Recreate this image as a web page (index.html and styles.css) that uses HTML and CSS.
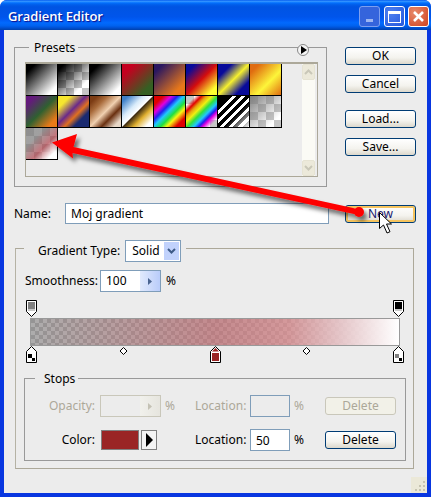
FILE: index.html
```html
<!DOCTYPE html>
<html lang="en">
<head>
<meta charset="utf-8">
<title>Gradient Editor</title>
<link rel="stylesheet" href="styles.css">
</head>
<body>
<div class="window">
  <header class="titlebar">
    <span class="title">Gradient Editor</span>
    <div class="controls">
      <span class="ctl ctl-min"><i></i></span>
      <span class="ctl ctl-max"><i></i></span>
      <span class="ctl ctl-close">
        <svg width="13" height="13" viewBox="0 0 13 13"><path d="M2 2l9 9M11 2l-9 9" stroke="#fff" stroke-width="2.6"/></svg>
      </span>
    </div>
  </header>
  <main class="client">
    <div class="top">
      <section class="presets">
        <div class="group-legend presets-legend">Presets</div>
        <span class="round-btn"><svg width="6" height="8" viewBox="0 0 6 8"><path d="M0 0l6 4-6 4z" fill="#000"/></svg></span>
        <div class="listbox">
          <div class="swatches">
            <span class="sw s1"></span><span class="sw s2"></span><span class="sw s1"></span><span class="sw s4"></span>
            <span class="sw s5"></span><span class="sw s6"></span><span class="sw s7"></span><span class="sw s8"></span>
            <span class="sw s9"></span><span class="sw s10"></span><span class="sw s11"></span><span class="sw s12"></span>
            <span class="sw s13"></span><span class="sw s14"></span><span class="sw s15"></span><span class="sw s16"></span>
            <span class="sw s17"></span>
          </div>
          <div class="scrollbar">
            <span class="sb-btn"><svg width="9" height="6" viewBox="0 0 9 6"><path d="M1 5l3.5-3.5L8 5" fill="none" stroke="#c9c7b8" stroke-width="2"/></svg></span>
            <span class="sb-btn"><svg width="9" height="6" viewBox="0 0 9 6"><path d="M1 1l3.5 3.5L8 1" fill="none" stroke="#c9c7b8" stroke-width="2"/></svg></span>
          </div>
        </div>
      </section>
      <div class="side-buttons">
        <button class="btn">OK</button>
        <button class="btn">Cancel</button>
        <button class="btn btn-load">Load...</button>
        <button class="btn">Save...</button>
      </div>
    </div>

    <div class="name-row">
      <label class="name-label">Name:</label>
      <input class="field name-input" value="Moj gradient">
      <button class="btn btn-new">New</button>
    </div>

    <section class="type-group">
      <div class="type-legend">
        <span>Gradient Type:</span>
        <div class="select"><span class="select-text">Solid</span>
          <span class="select-btn"><svg width="9" height="6" viewBox="0 0 9 6"><path d="M1 1l3.500 3.500L8 1" fill="none" stroke="#3d5a86" stroke-width="2"/></svg></span>
        </div>
      </div>
      <div class="smooth-row">
        <span class="smooth-label">Smoothness:</span>
        <div class="spin"><span class="spin-text">100</span>
          <span class="spin-btn"><svg width="4" height="7" viewBox="0 0 4 7"><path d="M0 0l4 3.500L0 7z" fill="#4a6490"/></svg></span>
        </div>
        <span class="pct">%</span>
      </div>
      <div class="ramp">
        <div class="ramp-row">
          <svg class="stop" viewBox="0 0 11 17"><path d="M.5.5h10v11l-5 5-5-5z" fill="#fff" stroke="#000"/><rect x="2" y="2" width="7" height="7" fill="#808080"/><rect x="2" y="9" width="7" height="2" fill="#c8c8c8"/></svg>
          <svg class="stop" viewBox="0 0 11 17"><path d="M.5.5h10v11l-5 5-5-5z" fill="#fff" stroke="#000"/><rect x="2" y="2" width="7" height="7" fill="#000"/><rect x="2" y="9" width="7" height="2" fill="#c8c8c8"/></svg>
        </div>
        <div class="bar"></div>
        <div class="ramp-row">
          <svg class="stop" viewBox="0 0 11 17"><path d="M5.500.5l5 5v11H.5V5.500z" fill="#fff" stroke="#000"/><rect x="2" y="8" width="4" height="4" fill="#000"/><rect x="6" y="12" width="3" height="3" fill="#000"/></svg>
          <svg class="stop" viewBox="0 0 11 17"><path d="M5.500 1.500l3.500 3.500-3.500 3.500L2 5z" fill="#fff" stroke="#000"/></svg>
          <svg class="stop" viewBox="0 0 11 17"><path d="M5.500.5l5 5v11H.5V5.500z" fill="#fff" stroke="#000"/><path d="M5.500 2L9 5.500H2z" fill="#9a2525"/><rect x="2" y="7" width="7" height="8" fill="#9a2525"/></svg>
          <svg class="stop" viewBox="0 0 11 17"><path d="M5.500 1.500l3.500 3.500-3.500 3.500L2 5z" fill="#fff" stroke="#000"/></svg>
          <svg class="stop" viewBox="0 0 11 17"><path d="M5.500.5l5 5v11H.5V5.500z" fill="#fff" stroke="#000"/><rect x="2" y="8" width="4" height="4" fill="#808080"/><rect x="6" y="12" width="3" height="3" fill="#000"/></svg>
        </div>
      </div>
      <section class="stops-group">
        <div class="group-legend stops-legend">Stops</div>
        <div class="stops-grid">
          <span class="cell-label off">Opacity:</span>
          <div class="spin spin-off"><span class="spin-text"></span>
            <span class="spin-btn"><svg width="4" height="7" viewBox="0 0 4 7"><path d="M0 0l4 3.500L0 7z" fill="#c4c2b4"/></svg></span>
          </div>
          <span class="off pct-cell">%</span>
          <span class="off">Location:</span>
          <input class="field small-input small-off" value="">
          <span class="off pct-cell">%</span>
          <button class="btn btn-off">Delete</button>

          <span class="cell-label">Color:</span>
          <div class="color-cell">
            <span class="color-chip"></span>
            <span class="color-arrow"><svg width="7" height="14" viewBox="0 0 7 14"><path d="M0 0l7 7-7 7z" fill="#000"/></svg></span>
          </div>
          <span class="pct-cell"></span>
          <span>Location:</span>
          <input class="field small-input" value="50">
          <span class="pct-cell">%</span>
          <button class="btn">Delete</button>
        </div>
      </section>
    </section>
    <svg class="grip" width="16" height="16" viewBox="0 0 16 16"><rect width="16" height="16" fill="#ebe8d8"/><path d="M12 4h2v2h-2zM8 8h2v2H8zM12 8h2v2h-2zM4 12h2v2H4zM8 12h2v2H8zM12 12h2v2h-2z" fill="#c6c3b0"/></svg>
  </main>

  <svg class="overlay" width="431" height="497" viewBox="0 0 431 497">
    <defs>
      <filter id="sh" x="-10%" y="-30%" width="120%" height="170%">
        <feDropShadow dx="3" dy="4" stdDeviation="2.2" flood-color="#000" flood-opacity=".55"/>
      </filter>
    </defs>
    <g filter="url(#sh)" fill="#fe0000">
      <path d="M52 142.500L77 134 73.500 147 360 209.500 358.500 215 72.500 153 73 158.500z"/>
      <circle cx="359" cy="212" r="5"/>
    </g>
    <path d="M379.500 212.500v16l4-3.500 3.500 8 3-1.300-3.500-7.700 5 0z" fill="#fff" stroke="#000"/>
  </svg>
</div>
</body>
</html>
```
FILE: styles.css
```css
* { box-sizing: border-box; }
html, body { margin: 0; padding: 0; }
body {
  width: 431px;
  height: 497px;
  overflow: hidden;
  background: #fff;
  font: 12px/14px "Noto Sans", "DejaVu Sans", sans-serif;
  color: #000;
}
.window {
  position: relative;
  width: 431px;
  height: 497px;
  display: flex;
  flex-direction: column;
  background: #0836e0;
  border-radius: 7px 7px 0 0;
  overflow: hidden;
}
.titlebar {
  flex: none;
  height: 30px;
  display: flex;
  align-items: flex-start;
  justify-content: space-between;
  padding: 6px 2px 0 8px;
  background: linear-gradient(180deg, #0058ee 0, #3593ff 4%, #288eff 6%, #127dff 8%, #036ffc 10%, #0262ee 14%, #0057e5 20%, #0054e3 24%, #0055eb 56%, #005bf5 66%, #026afe 76%, #0062ef 86%, #0052d6 92%, #0040ab 100%);
}
.title {
  font: 600 13px/20px "Open Sans", sans-serif;
  letter-spacing: -.1px;
  color: #fff;
  text-shadow: 1px 1px 1px #0f1089;
}
.controls { display: flex; gap: 3px; }
.ctl {
  width: 21px;
  height: 21px;
  border: 1px solid #fff;
  border-radius: 3px;
  display: flex;
  align-items: center;
  justify-content: center;
}
.ctl-min {
  border-color: #7d9ff0;
  background: #3564dc;
  margin-right: 1px;
  align-items: flex-end;
  padding-bottom: 4px;
}
.ctl-min i { width: 7px; height: 3px; background: #9db6f2; }
.ctl-max { background: radial-gradient(circle at 30% 30%, #4f80f0, #2558dc); }
.ctl-max i { width: 13px; height: 12px; border: 1px solid #fff; border-top-width: 3px; }
.ctl-close { background: radial-gradient(circle at 30% 30%, #e88a6c, #d0431f); }

.client {
  position: relative;
  flex: 1;
  margin: 0 4px 4px;
  padding: 0 11px 0 10px;
  background: #ececec;
  display: flex;
  flex-direction: column;
}
.top {
  display: flex;
  justify-content: space-between;
  padding-top: 17px;
}
.group-legend {
  width: fit-content;
  height: 14px;
  margin-top: -7px;
  background: #ececec;
}
.presets {
  position: relative;
  width: 313px;
  height: 140px;
  border: 1px solid #999;
}
.presets-legend { margin-left: 14px; padding: 0 3px 0 5px; }
.round-btn {
  position: absolute;
  top: -4px;
  right: 17px;
  width: 12px;
  height: 12px;
  border: 1px solid #888;
  border-radius: 50%;
  background: #f4f4f4;
  display: flex;
  align-items: center;
  justify-content: center;
  padding-left: 1px;
}
.listbox {
  display: flex;
  justify-content: space-between;
  width: 293px;
  height: 115px;
  margin: 7px 0 0 10px;
  border: 1px solid #aca899;
  border-width: 2px 1px 1px 1px;
  padding-right: 2px;
}
.swatches {
  width: 256px;
  display: grid;
  grid-template-columns: repeat(8, 32px);
  grid-auto-rows: 32px;
  align-content: start;
}
.sw { border-right: 1px solid #000; border-bottom: 1px solid #000; }
.s1 { background: linear-gradient(135deg, #000 15%, #fff 85%); }
.s2 { background: linear-gradient(135deg, #000 10%, transparent 75%), conic-gradient(#fff 25%, #c6c6c6 0 50%, #fff 0 75%, #c6c6c6 0) 0 0/16px 16px; }
.s4 { background: linear-gradient(135deg, #c4001f 20%, #356023 80%); }
.s5 { background: linear-gradient(135deg, #2a1760 15%, #e8781a 80%); }
.s6 { background: linear-gradient(135deg, #080a9a 15%, #d40d0d 50%, #ffff30 85%); }
.s7 { background: linear-gradient(135deg, #080a9a 22%, #f6f02e 50%, #080a9a 78%); }
.s8 { background: linear-gradient(135deg, #e06c10 15%, #fdf53a 60%, #e06c10 100%); }
.s9 { background: linear-gradient(135deg, #641a7c 15%, #2f6030 50%, #ea7a18 85%); }
.s10 { background: linear-gradient(135deg, #f6e62e 20%, #6a2a8a 45%, #e07020 60%, #1a2a70 75%); }
.s11 { background: linear-gradient(135deg, #7c3c14 12%, #a86a3a 28%, #f0d0b0 50%, #6a3010 68%, #e8d8c8 88%); }
.s12 { background: linear-gradient(135deg, #3f80c8 10%, #d8ebfa 35%, #fff 49%, #3a2810 51%, #e0b030 68%, #fff 88%); }
.s13 { background: linear-gradient(135deg, #e00000 15%, #e000e0 28%, #2020f0 38%, #20c8ff 48%, #20e040 60%, #f8f810 70%, #e00000 85%); }
.s14 { background: linear-gradient(135deg, transparent 15%, #e00000 25%, #e8a010 33%, #f0f010 42%, #30e040 52%, #20c8ff 62%, #2020f0 70%, #e000e0 76%, transparent 88%), conic-gradient(#fff 25%, #c6c6c6 0 50%, #fff 0 75%, #c6c6c6 0) 0 0/16px 16px; }
.s15 { background: linear-gradient(135deg, #000 22%, transparent 22%), linear-gradient(135deg, transparent 60%, rgba(255,255,255,.85) 95%), repeating-linear-gradient(135deg, #000 0 3.500px, #fff 3.500px 6.500px); }
.s16 { background: linear-gradient(135deg, #808080 0, transparent 80%), conic-gradient(#fff 25%, #c6c6c6 0 50%, #fff 0 75%, #c6c6c6 0) 0 0/16px 16px; }
.s17 { background: linear-gradient(135deg, rgba(120,120,120,.7) 30%, rgba(170,60,70,.7) 60%, #fff 85%), conic-gradient(#fff 25%, #c6c6c6 0 50%, #fff 0 75%, #c6c6c6 0) 0 0/16px 16px; }
.scrollbar {
  width: 13px;
  display: flex;
  flex-direction: column;
  justify-content: space-between;
  background: #fbfbf5;
}
.sb-btn {
  height: 16px;
  background: #ece9da;
  border: 1px solid #e6e3d3;
  border-radius: 2px;
  display: flex;
  align-items: center;
  justify-content: center;
}
.side-buttons {
  width: 71px;
  display: flex;
  flex-direction: column;
  gap: 10px;
}
.btn {
  width: 71px;
  height: 18px;
  padding: 0;
  font: inherit;
  color: #000;
  border: 1px solid #003c74;
  border-radius: 3px;
  background: linear-gradient(180deg, #fff, #f4f3ee 60%, #dcd8cc);
}
.btn-load { margin-top: 7px; }
.btn-new {
  margin: 2px 0 0 16px;
  box-shadow: inset 0 0 0 2px #f5c45f;
  color: #1a1a70;
}
.btn-off {
  color: #aca899;
  border-color: #c9c7ba;
  background: #f2f1e8;
  align-self: center;
}
.field {
  border: 1px solid #7f9db9;
  background: #fff;
  font: inherit;
  color: #000;
  padding: 0 5px;
  margin: 0;
  outline: none;
}
.name-row {
  display: flex;
  align-items: flex-start;
  margin-top: 16px;
  height: 21px;
}
.name-label { width: 51px; line-height: 21px; }
.name-input { width: 264px; height: 21px; }
.type-group {
  width: 399px;
  height: 221px;
  margin: 24px 0 0 1px;
  border: 1px solid #aca899;
  border-left-color: #b5b2a4;
}
.type-legend {
  display: flex;
  align-items: center;
  width: 162px;
  height: 22px;
  margin: -9px 0 0 8px;
  padding-left: 14px;
  background: #ececec;
  gap: 5px;
}
.select {
  width: 56px;
  height: 22px;
  display: flex;
  align-items: center;
  justify-content: space-between;
  border: 1px solid #7f9db9;
  background: #fff;
  padding: 1px 1px 1px 6px;
}
.select-btn {
  width: 15px;
  height: 18px;
  background: #c1d2fc;
  display: flex;
  align-items: center;
  justify-content: center;
}
.smooth-row {
  display: flex;
  align-items: center;
  margin: 8px 0 0 9px;
  height: 22px;
}
.smooth-label { width: 75px; }
.spin {
  width: 61px;
  height: 22px;
  display: flex;
  align-items: stretch;
  justify-content: space-between;
  border: 1px solid #7f9db9;
  background: #fff;
}
.spin-text { padding-left: 5px; line-height: 20px; }
.spin-btn {
  width: 20px;
  background: linear-gradient(90deg, #e1eafc, #b9ccfa);
  display: flex;
  align-items: center;
  justify-content: center;
}
.spin-off { border-color: #c9c7ba; background: #ececec; }
.spin-off .spin-btn { background: linear-gradient(90deg, #f1f1ec, #e6e5de); }
.pct { margin-left: 5px; }
.ramp {
  width: 378px;
  height: 63px;
  margin: 8px 0 0 10px;
}
.ramp-row {
  display: flex;
  justify-content: space-between;
  height: 17px;
}
.stop { width: 11px; height: 17px; display: block; }
.bar {
  height: 28px;
  margin: 1px 4px 0;
  border: 1px solid #999;
  background:
    linear-gradient(90deg, rgba(113,113,113,.58) 0, rgba(181,109,114,.8) 50%, rgba(205,135,138,.85) 70%, rgba(228,195,198,.95) 84%, #fff 100%),
    conic-gradient(#fff 25%, #c6c6c6 0 50%, #fff 0 75%, #c6c6c6 0) 0 0/8px 8px;
}
.stops-group {
  width: 382px;
  height: 83px;
  margin: 15px 0 0 8px;
  border: 1px solid #999;
}
.stops-legend { margin-left: 10px; padding: 0 3px 0 9px; }
.stops-grid {
  display: grid;
  grid-template-columns: 75px 65px 30px 55px 44px 31px 71px;
  grid-auto-rows: 22px;
  row-gap: 12px;
  align-items: center;
  margin-top: 9px;
}
.cell-label { text-align: right; padding-right: 5px; }
.off { color: #aca899; }
.small-input { width: 40px; height: 22px; }
.small-off { background: #ececec; }
.color-cell { display: flex; gap: 2px; height: 20px; margin-left: 1px; }
.color-chip {
  width: 38px;
  border: 1px solid #808080;
  background: #9a2525;
}
.color-arrow {
  width: 16px;
  border: 1px solid #808080;
  background: #f4f4f4;
  display: flex;
  align-items: center;
  justify-content: center;
}
.grip { position: absolute; right: 0; bottom: 0; }
.overlay { position: absolute; left: 0; top: 0; pointer-events: none; }
```
